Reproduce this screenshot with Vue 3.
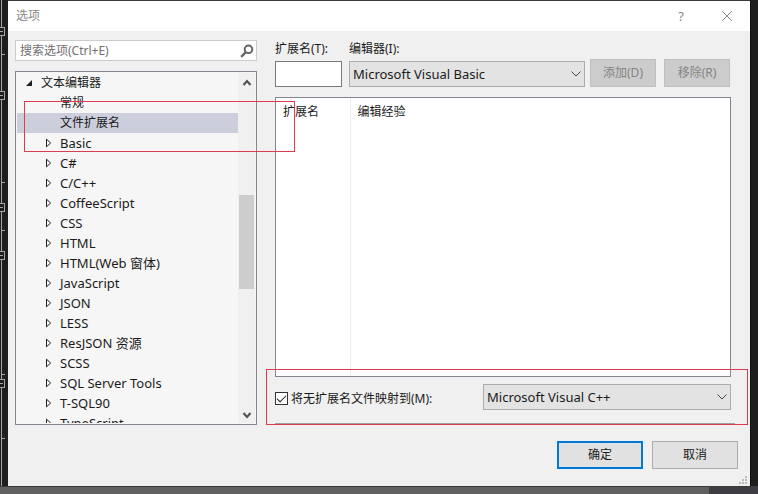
<script setup>
import {ref} from "vue";

const search = ref('')
const extension = ref('')
const editor = ref('Microsoft Visual Basic')
const mapEditor = ref('Microsoft Visual C++')
const mapWithoutExtension = ref(true)
const activeItem = ref('文件扩展名')

const editors = ['Microsoft Visual Basic', 'Microsoft Visual C++']

const treeItems = [
  {name: '常规', isLeaf: true},
  {name: '文件扩展名', isLeaf: true},
  {name: 'Basic'},
  {name: 'C#'},
  {name: 'C/C++'},
  {name: 'CoffeeScript'},
  {name: 'CSS'},
  {name: 'HTML'},
  {name: 'HTML(Web 窗体)'},
  {name: 'JavaScript'},
  {name: 'JSON'},
  {name: 'LESS'},
  {name: 'ResJSON 资源'},
  {name: 'SCSS'},
  {name: 'SQL Server Tools'},
  {name: 'T-SQL90'},
  {name: 'TypeScript'},
]

// outline marks of the code editor behind the dialog
const foldBoxes = [32, 96, 208, 256, 384]
const foldTicks = [54, 182, 230, 374, 438]

const setActiveItem = (name) => {
  activeItem.value = name
}
</script>

<template>
  <div class="desktop">
    <svg class="desktop__gutter" width="8" height="486" aria-hidden="true">
      <path d="M1.5 0V486" stroke="#a5a5a5"/>
      <path v-for="y of foldTicks" :key="y" :d="`M2 ${y}.5H5`" stroke="#a5a5a5"/>
      <g v-for="y of foldBoxes" :key="y">
        <rect x="-3.5" :y="y - 4.5" width="8" height="8" fill="#1e1e1e" stroke="#a5a5a5"/>
        <path :d="`M0 ${y - 1}.5H3`" stroke="#a5a5a5"/>
      </g>
    </svg>

    <main class="dialog">
      <header class="titlebar">
        <h1 class="titlebar__name">选项</h1>
        <button type="button" class="titlebar__button" aria-label="帮助">?</button>
        <button type="button" class="titlebar__button" aria-label="关闭">
          <svg width="12" height="12" viewBox="0 0 12 12"><path d="M1 1L11 11M11 1L1 11" stroke="#888" fill="none"/></svg>
        </button>
      </header>

      <div class="content">
        <aside class="sidebar">
          <div class="search">
            <input v-model="search" type="text" placeholder="搜索选项(Ctrl+E)" aria-label="搜索选项">
            <svg width="14" height="14" viewBox="0 0 14 14" fill="none" stroke="#666" stroke-width="2">
              <circle cx="8.5" cy="5.3" r="3.8"/>
              <path d="M5.8 8.2L1.2 12.8" stroke-width="2.4"/>
            </svg>
          </div>

          <div class="tree">
            <ul class="tree__list">
              <li class="tree__row _root">
                <svg width="8" height="8" viewBox="0 0 8 8"><path d="M7 1V7H1Z" fill="#1e1e1e"/></svg>
                <button type="button">文本编辑器</button>
              </li>
              <li v-for="item of treeItems"
                  :key="item.name"
                  class="tree__row"
                  :class="{'_leaf': item.isLeaf, '_active': item.name === activeItem}"
              >
                <svg width="8" height="10" viewBox="0 0 8 10">
                  <path v-if="!item.isLeaf" d="M1.5 1.2V8.8L5.6 5Z" fill="#fff" stroke="#1e1e1e"/>
                </svg>
                <button type="button" @click="setActiveItem(item.name)">{{item.name}}</button>
              </li>
            </ul>
            <div class="scrollbar" aria-hidden="true">
              <svg width="10" height="8" viewBox="0 0 10 8"><path d="M1.5 6L5 2L8.5 6" stroke="#505050" stroke-width="2" fill="none"/></svg>
              <div class="scrollbar__track"><div class="scrollbar__thumb"></div></div>
              <svg width="10" height="8" viewBox="0 0 10 8"><path d="M1.5 2L5 6L8.5 2" stroke="#505050" stroke-width="2" fill="none"/></svg>
            </div>
          </div>
        </aside>

        <section class="panel">
          <div class="fields">
            <div class="field _extension">
              <label for="extension">扩展名(T):</label>
              <input id="extension" v-model="extension" type="text">
            </div>
            <div class="field _editor">
              <label for="editor">编辑器(I):</label>
              <div class="select">
                <select id="editor" v-model="editor">
                  <option v-for="name of editors" :key="name">{{name}}</option>
                </select>
                <svg width="12" height="8" viewBox="0 0 12 8"><path d="M1.5 1.5L6 6L10.5 1.5" stroke="#444" fill="none"/></svg>
              </div>
            </div>
            <div class="fields__actions">
              <button type="button" disabled>添加(D)</button>
              <button type="button" disabled>移除(R)</button>
            </div>
          </div>

          <div class="list">
            <table>
              <thead>
                <tr><th>扩展名</th><th>编辑经验</th></tr>
              </thead>
              <tbody>
                <tr><td></td><td></td></tr>
              </tbody>
            </table>
          </div>

          <div class="mapping">
            <label class="mapping__label">
              <input v-model="mapWithoutExtension" type="checkbox">
              <span>将无扩展名文件映射到(M):</span>
            </label>
            <div class="select">
              <select v-model="mapEditor" aria-label="将无扩展名文件映射到">
                <option v-for="name of editors" :key="name">{{name}}</option>
              </select>
              <svg width="12" height="8" viewBox="0 0 12 8"><path d="M1.5 1.5L6 6L10.5 1.5" stroke="#444" fill="none"/></svg>
            </div>
          </div>
          <hr class="divider">
        </section>
      </div>

      <footer class="footer">
        <button type="button" class="_primary">确定</button>
        <button type="button">取消</button>
      </footer>

      <svg class="dialog__grip" width="10" height="10" viewBox="0 0 10 10" fill="#bababa" aria-hidden="true">
        <path d="M7 1h2v2h-2zM4 4h2v2h-2zM7 4h2v2h-2zM1 7h2v2h-2zM4 7h2v2h-2zM7 7h2v2h-2z"/>
      </svg>
      <div class="mark _tree"></div>
      <div class="mark _mapping"></div>
    </main>

    <div class="desktop__edge"></div>
    <div class="desktop__bottom"></div>
  </div>
</template>

<style>
body {
  margin: 0;
  background-color: #1e1e1e;
}
</style>

<style scoped>
* {
  box-sizing: border-box;
}
.desktop {
  display: grid;
  grid-template-columns: 8px 1fr 8px;
  grid-template-rows: minmax(0, 1fr) 8px;
  height: 100vh;
  overflow: hidden;
  background-color: #1e1e1e;
  color: #1a1a1a;
  font-family: "Noto Sans", "Noto Sans CJK SC", sans-serif;
  font-size: 12px;
  line-height: 20px;
}
.desktop__gutter {
  display: block;
}
.desktop__edge {
  border-left: 1px solid #111;
}
.desktop__bottom {
  grid-column: 1 / -1;
  border-top: 1px solid #3a3a3a;
  border-right: 49px solid #3e3e42;
  background-color: #606060;
}
button, input, select {
  margin: 0;
  padding: 0;
  border: 1px solid #adadad;
  border-radius: 0;
  color: inherit;
  font: inherit;
  outline: none;
}
svg {
  flex: none;
}
.dialog {
  position: relative;
  display: flex;
  flex-direction: column;
  min-width: 0;
  border-top: 1px solid #3a363a;
  background-color: #f0f0f0;
}
.titlebar {
  display: flex;
  align-items: center;
  height: 30px;
  flex: none;
  padding: 0 0 0 8px;
  background-color: #fff;
  color: #888;
}
.titlebar__name {
  flex: 1;
  margin: 0;
  font-size: 12px;
  font-weight: 400;
}
.titlebar__button {
  display: flex;
  align-items: center;
  justify-content: center;
  width: 46px;
  height: 30px;
  border: none;
  background-color: transparent;
  font-size: 13px;
}
.content {
  display: flex;
  flex: 1;
  gap: 18px;
  min-height: 0;
  padding: 9px 19px 0 7px;
}
.sidebar {
  display: flex;
  flex-direction: column;
  gap: 10px;
  width: 242px;
  flex: none;
}
.search {
  display: flex;
  align-items: center;
  height: 21px;
  flex: none;
  padding: 0 2px 0 4px;
  border: 1px solid #ccc;
  background-color: #fff;
}
.search input {
  flex: 1;
  min-width: 0;
  height: 19px;
  border: none;
  background-color: transparent;
}
.search input::placeholder {
  color: #707070;
}
.tree {
  display: flex;
  flex: 1;
  min-height: 0;
  padding: 1px;
  border: 1px solid #828790;
  background-color: #f6f6f6;
}
.tree__list {
  flex: 1;
  margin: 0;
  padding: 0;
  overflow: hidden;
  list-style: none;
}
.tree__row {
  display: flex;
  align-items: center;
  gap: 7px;
  height: 20px;
  padding-left: 28px;
  font-size: 13px;
}
.tree__row._root {
  gap: 8px;
  padding-left: 8px;
}
.tree__row._root,
.tree__row._leaf {
  font-size: 12px;
}
.tree__row._active {
  background-color: #cccedb;
}
.tree__row button {
  border: none;
  background-color: transparent;
  text-align: left;
  white-space: nowrap;
}
.scrollbar {
  display: flex;
  flex-direction: column;
  align-items: center;
  width: 17px;
  padding: 6px 0 4px;
  background-color: #f0f0f0;
}
.scrollbar__track {
  flex: 1;
  width: 15px;
  padding-top: 108px;
}
.scrollbar__thumb {
  height: 94px;
  background-color: #cdcdcd;
}
.panel {
  display: flex;
  flex: 1;
  flex-direction: column;
  min-width: 0;
  padding-bottom: 1px;
}
.fields {
  display: flex;
  align-items: flex-end;
}
.field {
  display: flex;
  flex-direction: column;
}
.field label {
  height: 21px;
  line-height: 18px;
}
.field._extension {
  width: 67px;
  margin-right: 7px;
}
.field._extension input {
  width: 100%;
  height: 26px;
  padding: 0 4px;
  border-color: #7a7a7a;
  background-color: #fff;
}
.field._editor {
  flex: 1;
  min-width: 0;
}
.select {
  display: flex;
  align-items: center;
}
.select select {
  flex: 1;
  min-width: 0;
  height: 26px;
  padding: 0 24px 0 3px;
  border-color: #acacac;
  appearance: none;
  background-color: #e3e3e3;
  font-size: 13px;
}
.select svg {
  margin-left: -15px;
  margin-right: 3px;
  pointer-events: none;
}
.fields__actions {
  display: flex;
  gap: 8px;
  margin: 0 1px 0 5px;
}
.fields__actions button {
  width: 66px;
  height: 28px;
  border-color: #bfbfbf;
  background-color: #ccc;
  color: #838383;
}
.list {
  display: flex;
  flex: 1;
  min-height: 0;
  margin-top: 10px;
  border: 1px solid #828790;
  background-color: #fff;
}
.list table {
  flex: 1;
  height: 100%;
  border-collapse: collapse;
  table-layout: fixed;
}
.list th {
  height: 27px;
  padding: 0 7px;
  font-weight: 400;
  text-align: left;
}
.list th:first-child,
.list td:first-child {
  width: 74px;
  border-right: 1px solid #ededed;
}
.mapping {
  display: flex;
  align-items: center;
  justify-content: space-between;
  height: 39px;
  flex: none;
}
.mapping__label {
  display: flex;
  align-items: center;
  gap: 3px;
  padding-top: 4px;
  white-space: nowrap;
}
.mapping__label input {
  display: grid;
  place-items: center;
  width: 13px;
  height: 13px;
  border-color: #333;
  appearance: none;
  background-color: #fff;
}
.mapping__label input:checked::before {
  width: 8px;
  height: 4px;
  margin-bottom: 3px;
  border-bottom: 1px solid #222;
  border-left: 1px solid #222;
  content: "";
  transform: rotate(-45deg);
}
.mapping .select {
  width: 248px;
}
.divider {
  width: calc(100% + 4px);
  height: 1px;
  margin: 7px 0 0;
  border: none;
  background-color: #a0a0a0;
}
.footer {
  display: flex;
  justify-content: flex-end;
  gap: 9px;
  padding: 16px 12px 17px;
}
.footer button {
  width: 86px;
  height: 28px;
  background-color: #e1e1e1;
}
.footer button._primary {
  border: 2px solid #0078d7;
}
.dialog__grip {
  position: absolute;
  right: 2px;
  bottom: 1px;
}
.mark {
  position: absolute;
  border: 1px solid #dc3c50;
  pointer-events: none;
}
.mark._tree {
  top: 100px;
  left: 16px;
  width: 271px;
  height: 51px;
}
.mark._mapping {
  right: 2px;
  bottom: 61px;
  left: 258px;
  height: 56px;
}
</style>
